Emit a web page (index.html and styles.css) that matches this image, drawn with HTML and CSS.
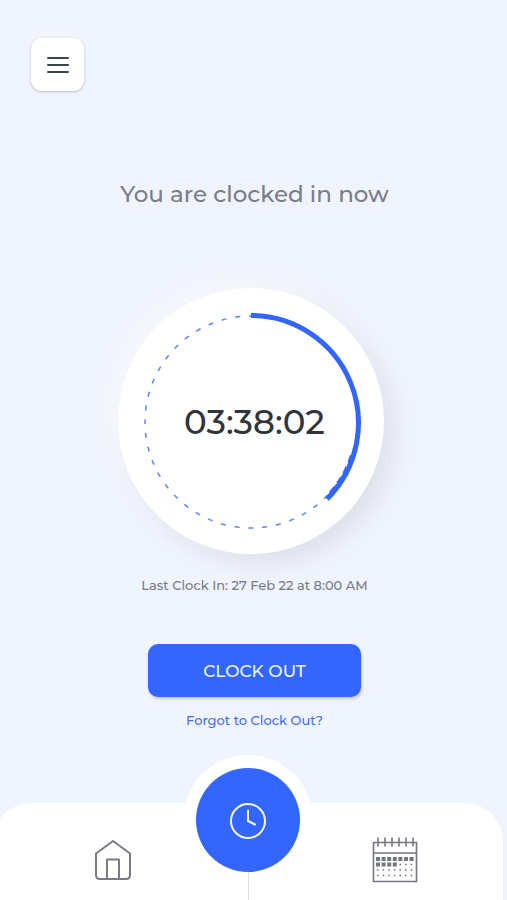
FILE: index.html
```html
<!DOCTYPE html>
<html lang="en">
<head>
<meta charset="utf-8">
<meta name="viewport" content="width=device-width, initial-scale=1">
<title>Time clock</title>
<link rel="stylesheet" href="styles.css">
</head>
<body>
<header class="topbar">
  <button class="menu" type="button" aria-label="Menu">
    <svg width="24" height="18" viewBox="0 0 24 18" fill="none" stroke="#3c454f" stroke-width="2" stroke-linecap="round"><path d="M2 2h20M2 9h20M2 16h20"/></svg>
  </button>
</header>
<main class="content">
  <h1 class="status">You are clocked in now</h1>
  <section class="dial" aria-label="Time worked">
    <svg class="ring" viewBox="0 0 266 266" fill="none" stroke="#3366ff">
      <circle cx="133" cy="134" r="106" stroke="#5c85f7" stroke-width="1.500" stroke-dasharray="5 8.875" stroke-dashoffset="2.500"/>
      <path d="M133 27.500A107.500 107.500 0 0 1 209 211" stroke-width="5"/>
      <path d="M232.900 167.400A105 105 0 0 1 208.500 208" stroke-width="2" stroke-dasharray="7 5"/>
    </svg>
    <time class="elapsed">03:38:02</time>
  </section>
  <p class="last">Last Clock In: 27 Feb 22 at 8:00 AM</p>
  <button class="clock-out" type="button">CLOCK OUT</button>
  <a class="forgot" href="#forgot">Forgot to Clock Out?</a>
</main>
<nav class="tabs" aria-label="Main">
  <a class="tab home" href="#home" aria-label="Home">
    <svg width="38" height="42" viewBox="0 0 38 42" fill="none" stroke="#787b86" stroke-width="2" stroke-linejoin="round"><path d="M19 2L36 14.500V36q0 4-4 4H6q-4 0-4-4V14.500zM13 40V20.500h12V40"/></svg>
  </a>
  <div class="middle">
    <a class="clock" href="#clock" aria-label="Clock" aria-current="page">
      <svg width="38" height="38" viewBox="0 0 38 38" fill="none" stroke="#f4f7ff" stroke-width="2" stroke-linecap="round" stroke-linejoin="round"><circle cx="19" cy="20" r="17"/><path d="M19 9.500V20l7 3.500"/></svg>
    </a>
    <span class="divider"></span>
  </div>
  <a class="tab calendar" href="#calendar" aria-label="Calendar">
    <svg width="46" height="46" viewBox="0 0 46 46" fill="none" stroke="#747782">
      <path d="M1.500 5.500h43v39h-43zM1.500 16h43" stroke-width="1.600"/>
      <path d="M6 .5v9M13 .5v9M20 .5v9M27 .5v9M34 .5v9M41 .5v9" stroke-width="1.600"/>
      <path d="M4 22h38" stroke-width="4" stroke-dasharray="4 1.600"/>
      <path d="M4 27.500h21" stroke-width="4" stroke-dasharray="4 1.600"/>
      <path d="M27.400 27.500H42M5 33h37M5 38.500h37" stroke-width="1.600" stroke-dasharray="1.600 4"/>
    </svg>
  </a>
</nav>
</body>
</html>
```

FILE: styles.css
```css
* { box-sizing: border-box; }

body {
  margin: 0;
  min-height: 100vh;
  display: flex;
  flex-direction: column;
  overflow-x: hidden;
  background: #f0f4fe;
  color: #797d88;
  font-family: Montserrat, Inter, sans-serif;
  font-weight: 500;
}

svg { display: block; }

.topbar { padding: 38px 31px 0; }

.menu {
  display: grid;
  place-items: center;
  width: 53px;
  height: 53px;
  padding: 0;
  border: 0;
  border-radius: 11px;
  background: #fff;
  box-shadow: 0 1px 3px rgba(60, 65, 80, .3);
}

.content {
  flex: 1;
  display: flex;
  flex-direction: column;
  align-items: center;
  padding-left: 2px;
}

.status {
  margin: 87px 0 0;
  font-size: 23px;
  line-height: 32px;
  font-weight: 500;
}

.dial {
  display: grid;
  place-items: center;
  width: 266px;
  aspect-ratio: 1;
  margin: 78px 8px 0 0;
  border-radius: 50%;
  background: #fff;
  box-shadow: 11px 11px 22px rgba(160, 162, 168, .22), -8px -8px 20px rgba(250, 250, 252, .8);
}

.ring, .elapsed { grid-area: 1 / 1; }

.ring { width: 100%; }

.elapsed {
  padding: 2px 0 0 8px;
  color: #30343b;
  font-size: 34px;
  line-height: 40px;
  font-weight: 500;
}

.last {
  margin: 21px 0 0;
  font-size: 13px;
  line-height: 20px;
}

.clock-out {
  width: 213px;
  height: 53px;
  margin-top: 49px;
  padding: 0;
  border: 0;
  border-radius: 10px;
  background: #3366ff;
  color: #f0f4fe;
  font: inherit;
  font-size: 17px;
  box-shadow: 1px 2px 3px rgba(60, 65, 80, .25);
}

.forgot {
  margin-top: 13px;
  color: #4470f0;
  font-size: 13px;
  line-height: 20px;
  text-decoration: none;
}

.tabs {
  display: grid;
  grid-template-columns: 1fr 104px 1fr;
  min-height: 97px;
  margin: 0 4px 0 -7px;
  border-radius: 38px 38px 0 0;
  background: #fff;
}

.tab {
  display: flex;
  align-items: center;
  padding-top: 17px;
}

.home { justify-content: flex-end; padding-right: 64px; }

.calendar { padding-left: 72px; }

.middle {
  display: flex;
  flex-direction: column;
  align-items: center;
  margin-top: -35px;
}

.clock {
  display: grid;
  place-items: center;
  width: 104px;
  height: 104px;
  border-radius: 50%;
  background: #3366ff;
  box-shadow: 0 0 0 13px #fff;
}

.divider {
  flex: 1;
  width: 1px;
  background: #dddfe6;
  z-index: 1;
}
```
